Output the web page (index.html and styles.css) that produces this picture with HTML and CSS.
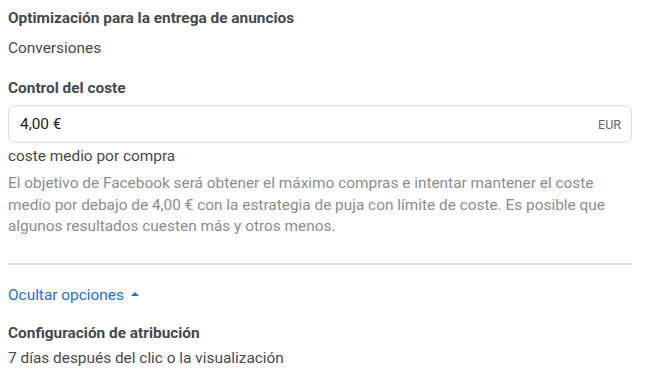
FILE: index.html
```html
<!DOCTYPE html>
<html lang="es">
<head>
<meta charset="utf-8">
<link rel="stylesheet" href="styles.css">
</head>
<body>
<div class="panel">
  <section class="field">
    <div class="label">Optimización para la entrega de anuncios</div>
    <div class="value">Conversiones</div>
  </section>
  <section class="field cost">
    <div class="label">Control del coste</div>
    <div class="input">
      <span class="amount">4,00 €</span>
      <span class="currency">EUR</span>
    </div>
    <div class="sub">coste medio por compra</div>
    <p class="help">El objetivo de Facebook será obtener el máximo compras e intentar mantener el coste medio por debajo de 4,00 € con la estrategia de puja con límite de coste. Es posible que algunos resultados cuesten más y otros menos.</p>
  </section>
  <hr class="divider">
  <a class="toggle" href="#">Ocultar opciones <span class="caret"></span></a>
  <section class="field attrib">
    <div class="label">Configuración de atribución</div>
    <div class="value">7 días después del clic o la visualización</div>
  </section>
</div>
</body>
</html>
```
FILE: styles.css
```css
html, body { margin: 0; padding: 0; background: #fff; }
body {
  font-family: Roboto, "Liberation Sans", Arial, sans-serif;
  font-size: 15.4px;
  color: #1c1e21;
}
.panel {
  width: 624px;
  padding: 8px 0 0 8px;
}
.field { display: flex; flex-direction: column; }
.label {
  font-weight: 700;
  color: #444950;
  line-height: 20px;
}
.value {
  color: #444950;
  line-height: 20px;
  margin-top: 10px;
}
.cost { margin-top: 20px; }
.cost .label { margin-bottom: 7px; }
.input {
  height: 38px;
  box-sizing: border-box;
  border: 1px solid #dadde1;
  border-radius: 6px;
  display: flex;
  align-items: center;
  justify-content: space-between;
  padding: 0 10px 0 11px;
}
.amount { color: #1c1e21; }
.currency { color: #606770; font-size: 12.5px; }
.sub {
  color: #444950;
  line-height: 20px;
  margin-top: 3px;
}
.help {
  margin: 7px 0 0 0;
  color: #8a8d91;
  line-height: 21.5px;
}
.divider {
  border: 0;
  height: 2px;
  background: #dadde1;
  margin: 25px 0 0 0;
}
.toggle {
  display: inline-flex;
  align-items: center;
  gap: 7px;
  margin-top: 20px;
  color: #216fdb;
  text-decoration: none;
  line-height: 20px;
}
.caret {
  width: 0; height: 0;
  border-left: 4px solid transparent;
  border-right: 4px solid transparent;
  border-bottom: 4px solid #216fdb;
  margin-top: -2px;
}
.attrib { margin-top: 18px; }
.attrib .value { margin-top: 5px; }
```
